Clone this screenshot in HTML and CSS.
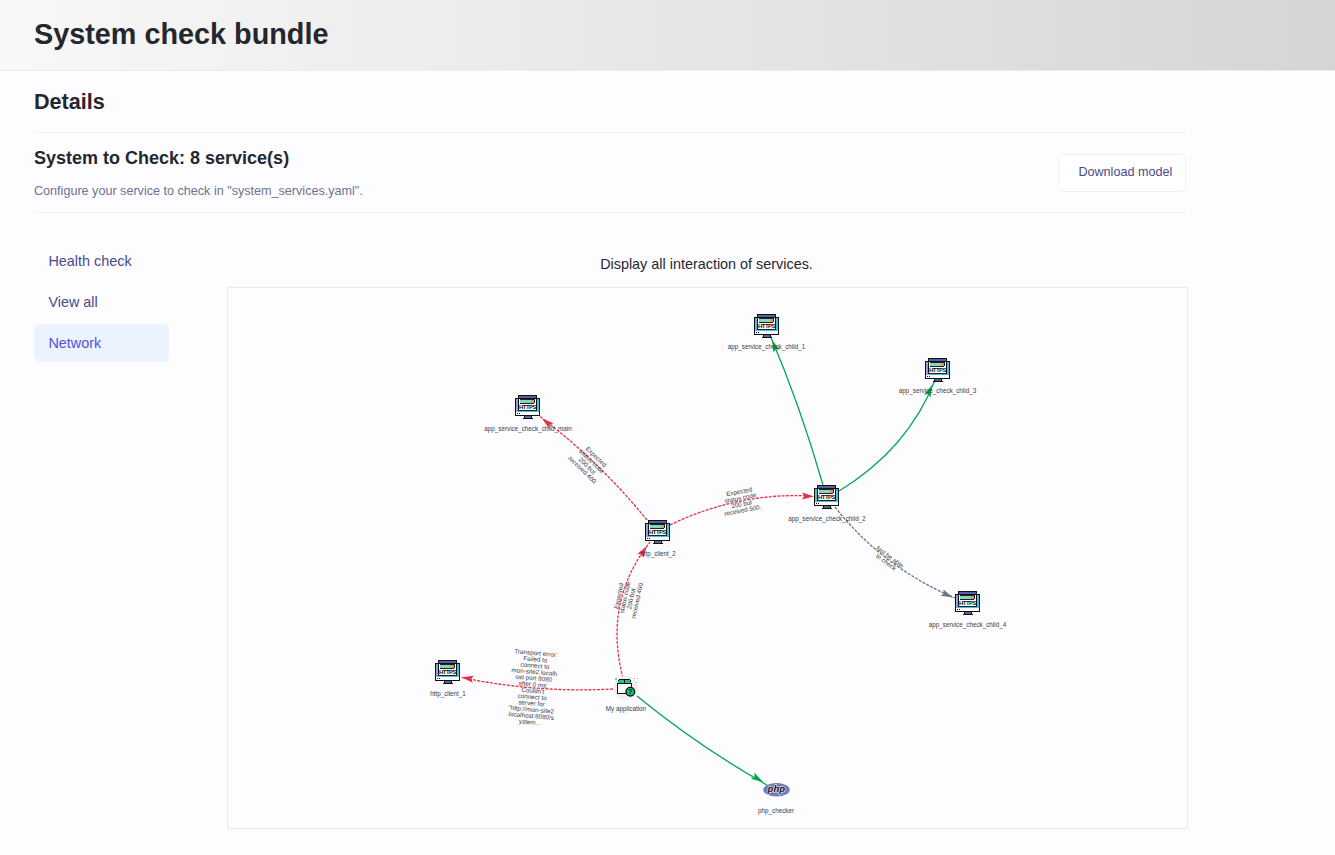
FILE: index.html
```html
<!DOCTYPE html>
<html lang="en">
<head>
<meta charset="utf-8">
<title>System check bundle</title>
<link rel="stylesheet" href="styles.css">
</head>
<body>
<header class="topbar"><h1>System check bundle</h1></header>
<main class="page">
  <h2 class="section-title">Details</h2>
  <section class="summary">
    <div class="summary-text">
      <h3>System to Check: 8 service(s)</h3>
      <p>Configure your service to check in "system_services.yaml".</p>
    </div>
    <a class="button">Download model</a>
  </section>
  <div class="content">
    <nav class="menu">
      <a>Health check</a>
      <a>View all</a>
      <a class="active">Network</a>
    </nav>
    <section class="network">
      <p class="caption">Display all interaction of services.</p>
      <div class="canvas">
        <svg viewBox="228 288 959 540" width="959" height="540">
          <defs>
            <g id="monitor" shape-rendering="crispEdges">
              <rect x="0" y="3" width="25" height="18" fill="#111"/>
              <rect x="1" y="4" width="23" height="13" fill="#3cc4ee"/>
              <rect x="1" y="4" width="1" height="13" fill="#9c9fd8"/>
              <rect x="1" y="17" width="23" height="3" fill="#fff"/>
              <rect x="2" y="18" width="1" height="1" fill="#111"/>
              <rect x="4" y="18" width="1" height="1" fill="#111"/>
              <rect x="3" y="0" width="19" height="16" fill="#111"/>
              <rect x="4" y="1" width="17" height="2" fill="#555fa9"/>
              <rect x="4" y="4" width="17" height="11" fill="#fff"/>
              <rect x="5" y="5" width="11" height="3" fill="#84d7bb"/>
              <rect x="16" y="5" width="3" height="3" fill="#e9935a"/>
              <path d="M5 4.500H20M5 8.500H19M19.500 4V8M3 15.500H22" stroke="#222" fill="none"/>
              <rect x="10" y="21" width="6" height="2" fill="#5862a3"/>
              <path d="M9.500 21V23M16.500 21V23" stroke="#111"/>
              <rect x="8" y="23" width="10" height="1" fill="#111"/>
            </g>
            <path id="arrow" d="M0 0L-12 -3.500L-9.900 0L-12 3.500Z"/>
          </defs>
          <g class="edge ok">
            <path d="M823 485Q800 405 770 335"/>
            <path d="M839 491Q908 449 935 380"/>
            <path d="M637 696Q698 746 767 785"/>
          </g>
          <g class="edge error">
            <path d="M647 520Q599 461 538 415"/>
            <path d="M670 525Q738 492 812 496"/>
            <path d="M623 678Q603 602 650 542"/>
            <path d="M613 689Q535 693 462 677.500"/>
          </g>
          <g class="edge unknown"><path d="M835 507Q882 567 955 598"/></g>
          <g fill="#00a650">
            <use href="#arrow" transform="translate(772 340) rotate(-113)"/>
            <use href="#arrow" transform="translate(932 385) rotate(-67)"/>
            <use href="#arrow" transform="translate(763 782) rotate(31)"/>
          </g>
          <g fill="#e23249">
            <use href="#arrow" transform="translate(542 418.500) rotate(-142)"/>
            <use href="#arrow" transform="translate(814 496.500) rotate(2)"/>
            <use href="#arrow" transform="translate(647 546) rotate(-56)"/>
            <use href="#arrow" transform="translate(461.500 677.300) rotate(-171)"/>
          </g>
          <use href="#arrow" fill="#6c757d" transform="translate(953 597.500) rotate(24)"/>

          <g class="label">
            <g transform="translate(589.500 463.500) rotate(44)">
              <text y="-7.300">Expected</text><text y="-1">status code</text><text y="5.300">200 but</text><text y="11.600">received 400.</text>
            </g>
            <g transform="translate(741 501) rotate(-11)">
              <text y="-7.300">Expected</text><text y="-1">status code</text><text y="5.300">200 but</text><text y="11.600">received 500.</text>
            </g>
            <g transform="translate(628 598) rotate(-78)">
              <text y="-7.300">Expected</text><text y="-1">status code</text><text y="5.300">200 but</text><text y="11.600">received 400.</text>
            </g>
            <g transform="translate(888 559.500) rotate(37)">
              <text y="-1">Not be able</text><text y="5.300">to check</text>
            </g>
            <g transform="translate(533 687.500) rotate(5)">
              <text y="-32.500">Transport error:</text><text y="-26.200">Failed to</text>
              <text y="-19.900">connect to</text><text y="-13.600">mon-site2.localh</text>
              <text y="-7.300">ost port 8080</text><text y="-1">after 0 ms:</text>
              <text y="5.300">Couldn't</text><text y="11.600">connect to</text>
              <text y="17.900">server for</text><text y="24.200">"http://mon-site2</text>
              <text y="30.500">.localhost:8080/s</text><text y="36.800">ystem...</text>
            </g>
            <text x="766.500" y="349">app_service_check_child_1</text>
            <text x="937.500" y="393">app_service_check_child_3</text>
            <text x="528" y="431">app_service_check_child_main</text>
            <text x="658" y="556">http_client_2</text>
            <text x="827" y="521">app_service_check_child_2</text>
            <text x="967.500" y="627">app_service_check_child_4</text>
            <text x="448" y="696">http_client_1</text>
            <text x="626" y="711">My application</text>
            <text x="776" y="813">php_checker</text>
          </g>

          <g class="protocol">
            <use href="#monitor" x="754" y="314"/><text x="766.500" y="328">HTTPS</text>
            <use href="#monitor" x="925" y="358"/><text x="937.500" y="372">HTTPS</text>
            <use href="#monitor" x="515" y="395"/><text x="527.500" y="409">HTTPS</text>
            <use href="#monitor" x="645" y="520"/><text x="657.500" y="534">HTTPS</text>
            <use href="#monitor" x="814" y="485"/><text x="826.500" y="499">HTTPS</text>
            <use href="#monitor" x="955" y="591"/><text x="967.500" y="605">HTTPS</text>
            <use href="#monitor" x="435" y="660"/><text x="447.500" y="674">HTTPS</text>
          </g>

          <circle cx="625.700" cy="687.700" r="12" fill="#eeeef0"/>
          <g shape-rendering="crispEdges">
            <rect x="617" y="683" width="15" height="11" fill="#111"/>
            <rect x="618" y="684" width="13" height="9" fill="#fafafa"/>
            <path d="M619 679H630L632 684H617Z" fill="#111"/>
            <path d="M619 680H624V683H618ZM625 680H630L631 683H625Z" fill="#0cce7c"/>
            <path d="M615 678h2v2h-2zM634 678h1v1h-1zM637 678h1v1h-1zM636 682h1v1h-1z" fill="#9ab4cc"/>
          </g>
          <circle cx="630.300" cy="691.700" r="4.300" fill="#0cce7c" stroke="#111" stroke-width="1.400"/>
          <text class="question" x="630.300" y="694.300">?</text>
          <ellipse cx="776.500" cy="789.700" rx="13.300" ry="6.700" fill="#777bb3"/>
          <text class="php" x="776.300" y="791.500">php</text>
        </svg>
      </div>
    </section>
  </div>
</main>
</body>
</html>
```
FILE: styles.css
```css
* { box-sizing: border-box; }
body {
  margin: 0;
  min-height: 855px;
  background: #fdfdff;
  color: #24272e;
  font: 14.4px/20px "Liberation Sans", Arial, sans-serif;
}
h1, h2, h3, p { margin: 0; }
.topbar {
  height: 71px;
  padding: 16px 34px;
  background: linear-gradient(to right, #f8f8f8, #d5d5d5);
  border-bottom: 1px solid #ececf2;
}
.topbar h1 { font-size: 28.8px; line-height: 36px; }
.page { width: 1188px; padding-left: 34px; }
.section-title {
  width: 1152px;
  height: 62px;
  padding-top: 17px;
  border-bottom: 1px solid #f0f0f5;
  font-size: 21.6px;
  line-height: 27px;
}
.summary {
  display: flex;
  justify-content: space-between;
  align-items: center;
  width: 1152px;
  height: 80px;
  border-bottom: 1px solid #f0f0f5;
}
.summary-text { padding-top: 2px; }
.summary h3 { font-size: 18px; line-height: 23px; margin-bottom: 12px; }
.summary p { font-size: 12.6px; line-height: 18px; color: #6e7191; }
.button {
  width: 128px;
  height: 38px;
  padding-left: 19.4px;
  border: 1px solid #eff0f6;
  border-radius: 6px;
  background: #fff;
  color: #484a8c;
  font-size: 12.6px;
  line-height: 34px;
  white-space: nowrap;
}
.content { display: flex; justify-content: space-between; padding-top: 29px; }
.menu { display: flex; flex-direction: column; gap: 3px; width: 135px; }
.menu a {
  height: 38px;
  padding-left: 14.4px;
  border-radius: 6px;
  color: #484a8c;
  line-height: 38px;
}
.menu .active { background: #eaf3fe; color: #5052e8; }
.network { width: 961px; }
.caption { padding: 12px 2px 13px 0; text-align: center; }
.canvas { height: 542px; border: 1px solid #ebebee; }
.canvas svg { display: block; }
.edge { fill: none; stroke-width: 1.3; }
.ok { stroke: #00a650; }
.error { stroke: #e23249; stroke-dasharray: 3 1.3; }
.unknown { stroke: #6c757d; stroke-dasharray: 3 1.3; }
.label { font-size: 6.3px; fill: #3c3c3c; text-anchor: middle; }
.protocol { font-size: 6px; font-weight: bold; fill: #111; text-anchor: middle; letter-spacing: -0.5px; }
.question { font-size: 7px; font-weight: bold; text-anchor: middle; }
.php {
  font-size: 9.5px;
  font-style: italic;
  font-weight: bold;
  text-anchor: middle;
  fill: #111;
  stroke: #fff;
  stroke-width: 1px;
  paint-order: stroke;
}
```
